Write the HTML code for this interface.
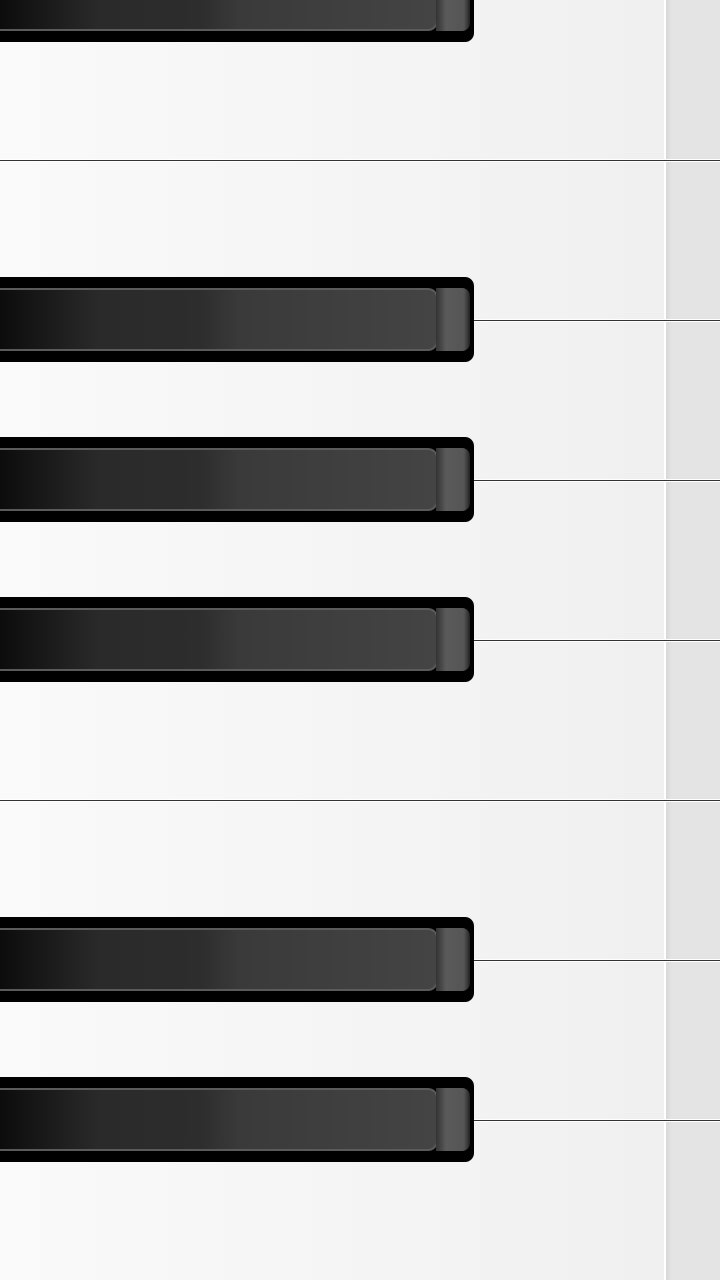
<!DOCTYPE html>
<html><head><style>
body{margin:0;width:720px;height:1280px;overflow:hidden;position:relative;background:linear-gradient(90deg,#fafafa,#f0f0f0 660px);}
.strip{position:absolute;left:664px;top:0;width:56px;height:1280px;background:linear-gradient(90deg,#d8d8d8,#e4e4e4 6px,#e4e4e4);border-left:2px solid #fff;box-sizing:border-box}
.line{position:absolute;left:0;width:720px;height:1px;background:#333;box-shadow:0 1px 0 #fff,0 -1px 0 #fff}
.bk{position:absolute;left:0;width:474px;height:85px;background:#000;border-radius:0 9px 9px 0}
.bk .in{position:absolute;left:0;top:11px;width:438px;height:63px;box-sizing:border-box;border:2px solid #5a5a5a;border-left:none;border-radius:0 10px 10px 0;background:linear-gradient(90deg,#0c0c0c,#2a2a2a 100px,#2d2d2d 200px,#3a3a3a 240px,#444 438px)}
.bk .cap{position:absolute;left:436px;top:11px;width:34px;height:63px;border-radius:0 8px 8px 0;background:linear-gradient(90deg,#333,#5a5a5a 10px,#555 28px,#222)}
</style></head><body>
<div class="strip"></div>
<div class="line" style="top:160px"></div>
<div class="line" style="top:320px"></div>
<div class="line" style="top:480px"></div>
<div class="line" style="top:640px"></div>
<div class="line" style="top:800px"></div>
<div class="line" style="top:960px"></div>
<div class="line" style="top:1120px"></div>
<div class="bk" style="top:-43px"><div class="in"></div><div class="cap"></div></div>
<div class="bk" style="top:277px"><div class="in"></div><div class="cap"></div></div>
<div class="bk" style="top:437px"><div class="in"></div><div class="cap"></div></div>
<div class="bk" style="top:597px"><div class="in"></div><div class="cap"></div></div>
<div class="bk" style="top:917px"><div class="in"></div><div class="cap"></div></div>
<div class="bk" style="top:1077px"><div class="in"></div><div class="cap"></div></div>
</body></html>
